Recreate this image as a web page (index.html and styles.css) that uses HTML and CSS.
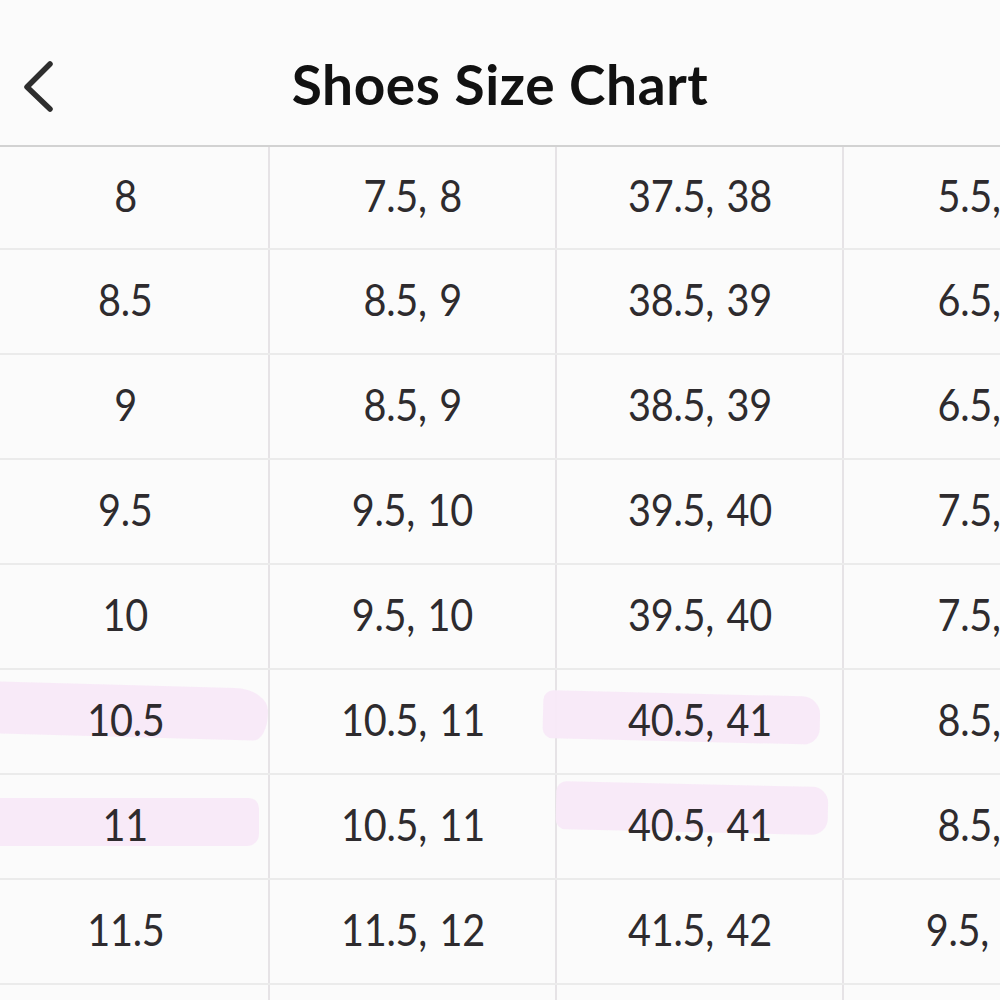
FILE: index.html
```html
<!DOCTYPE html>
<html>
<head>
<meta charset="utf-8">
<link rel="stylesheet" href="styles.css">
</head>
<body>
<div class="screen">
  <header class="topbar">
    <button class="back" aria-label="Back">
      <svg width="40" height="60" viewBox="0 0 40 60"><path d="M29 7 L6 30 L29 52" fill="none" stroke="#2e2e2e" stroke-width="5.5" stroke-linecap="round" stroke-linejoin="round"/></svg>
    </button>
    <h1 class="title">Shoes Size Chart</h1>
  </header>
  <div class="table">
    <div class="row"><div class="cell"><span>8</span></div><div class="cell"><span>7.5, 8</span></div><div class="cell"><span>37.5, 38</span></div><div class="cell"><span>5.5, 6</span></div></div>
    <div class="row"><div class="cell"><span>8.5</span></div><div class="cell"><span>8.5, 9</span></div><div class="cell"><span>38.5, 39</span></div><div class="cell"><span>6.5, 7</span></div></div>
    <div class="row"><div class="cell"><span>9</span></div><div class="cell"><span>8.5, 9</span></div><div class="cell"><span>38.5, 39</span></div><div class="cell"><span>6.5, 7</span></div></div>
    <div class="row"><div class="cell"><span>9.5</span></div><div class="cell"><span>9.5, 10</span></div><div class="cell"><span>39.5, 40</span></div><div class="cell"><span>7.5, 8</span></div></div>
    <div class="row"><div class="cell"><span>10</span></div><div class="cell"><span>9.5, 10</span></div><div class="cell"><span>39.5, 40</span></div><div class="cell"><span>7.5, 8</span></div></div>
    <div class="row"><div class="cell"><i class="mark m1"></i><span>10.5</span></div><div class="cell"><span>10.5, 11</span></div><div class="cell"><i class="mark m3"></i><span>40.5, 41</span></div><div class="cell"><span>8.5, 9</span></div></div>
    <div class="row"><div class="cell"><i class="mark m2"></i><span>11</span></div><div class="cell"><span>10.5, 11</span></div><div class="cell"><i class="mark m4"></i><span>40.5, 41</span></div><div class="cell"><span>8.5, 9</span></div></div>
    <div class="row"><div class="cell"><span>11.5</span></div><div class="cell"><span>11.5, 12</span></div><div class="cell"><span>41.5, 42</span></div><div class="cell"><span>9.5, 10</span></div></div>
    <div class="row"><div class="cell"><span>12</span></div><div class="cell"><span>11.5, 12</span></div><div class="cell"><span>41.5, 42</span></div><div class="cell"><span>9.5, 10</span></div></div>
  </div>
</div>
</body>
</html>
```

FILE: styles.css
```css
* { box-sizing: border-box; }
html, body {
  margin: 0;
  padding: 0;
  background: #fbfbfb;
  overflow: hidden;
  width: 1000px;
  height: 1000px;
}
.screen {
  width: 1000px;
  height: 1000px;
  overflow: hidden;
  font-family: "Lato", "Open Sans", sans-serif;
}
.topbar {
  position: relative;
  height: 147px;
  border-bottom: 2px solid #d2d2d2;
  display: flex;
  align-items: center;
  justify-content: center;
}
.back {
  position: absolute;
  left: 21px;
  top: 57px;
  width: 40px;
  height: 60px;
  padding: 0;
  border: 0;
  background: none;
  display: flex;
}
.title {
  margin: 0;
  margin-top: 22px;
  font-size: 55px;
  font-weight: 700;
  color: #111;
  letter-spacing: 0.6px;
}
.table {
  margin-left: -17px;
  width: 1300px;
}
.row {
  display: grid;
  grid-template-columns: repeat(4, 287px);
  height: 105px;
  border-bottom: 2px solid #ebebeb;
}
.row:first-child { height: 103px; }
.cell {
  position: relative;
  border-right: 2px solid #e6e3e6;
  display: flex;
  align-items: center;
  justify-content: center;
  padding-bottom: 5px;
  font-size: 44px;
  color: #2e2b2e;
}
.cell span {
  position: relative;
  z-index: 1;
  transform: scaleX(0.9);
  letter-spacing: -0.3px;
  word-spacing: 3px;
}
.mark {
  position: absolute;
  z-index: 0;
  background: #f8e9f8;
  opacity: 0.95;
}
.m1 {
  left: 0;
  top: 11px;
  width: 285px;
  height: 52px;
  border-radius: 6px 34px 14px 6px / 6px 22px 26px 6px;
  transform: rotate(1.6deg);
  transform-origin: left center;
}
.m2 {
  left: 0;
  top: 23px;
  width: 276px;
  height: 48px;
  border-radius: 4px 10px 12px 4px;
}
.m3 {
  left: -14px;
  top: 20px;
  width: 277px;
  height: 48px;
  border-radius: 10px 18px 16px 10px;
  transform: rotate(1.4deg);
  transform-origin: left center;
}
.m4 {
  left: -1px;
  top: 6px;
  width: 272px;
  height: 48px;
  border-radius: 10px 16px 16px 10px;
  transform: rotate(1.3deg);
  transform-origin: left center;
}
```
